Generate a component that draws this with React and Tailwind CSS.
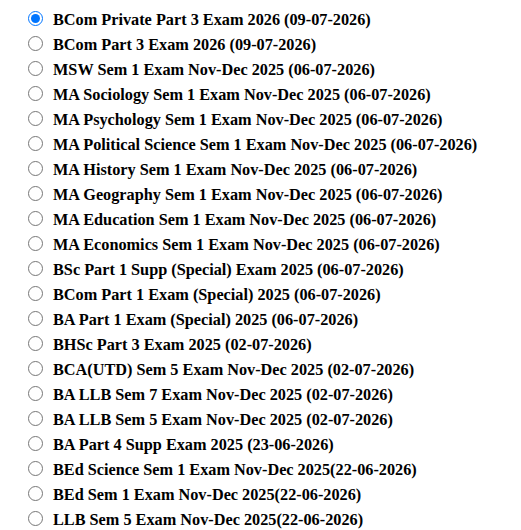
import React from "react";

const exams = [
  "BCom Private Part 3 Exam 2026 (09-07-2026)",
  "BCom Part 3 Exam 2026 (09-07-2026)",
  "MSW Sem 1 Exam Nov-Dec 2025 (06-07-2026)",
  "MA Sociology Sem 1 Exam Nov-Dec 2025 (06-07-2026)",
  "MA Psychology Sem 1 Exam Nov-Dec 2025 (06-07-2026)",
  "MA Political Science Sem 1 Exam Nov-Dec 2025 (06-07-2026)",
  "MA History Sem 1 Exam Nov-Dec 2025 (06-07-2026)",
  "MA Geography Sem 1 Exam Nov-Dec 2025 (06-07-2026)",
  "MA Education Sem 1 Exam Nov-Dec 2025 (06-07-2026)",
  "MA Economics Sem 1 Exam Nov-Dec 2025 (06-07-2026)",
  "BSc Part 1 Supp (Special) Exam 2025 (06-07-2026)",
  "BCom Part 1 Exam (Special) 2025 (06-07-2026)",
  "BA Part 1 Exam (Special) 2025 (06-07-2026)",
  "BHSc Part 3 Exam 2025 (02-07-2026)",
  "BCA(UTD) Sem 5 Exam Nov-Dec 2025 (02-07-2026)",
  "BA LLB Sem 7 Exam Nov-Dec 2025 (02-07-2026)",
  "BA LLB Sem 5 Exam Nov-Dec 2025 (02-07-2026)",
  "BA Part 4 Supp Exam 2025 (23-06-2026)",
  "BEd Science Sem 1 Exam Nov-Dec 2025(22-06-2026)",
  "BEd Sem 1 Exam Nov-Dec 2025(22-06-2026)",
  "LLB Sem 5 Exam Nov-Dec 2025(22-06-2026)",
];

export default function App() {
  return (
    <div className="w-[521px] h-[530px] overflow-hidden bg-white pt-[6px] pl-[28px] font-['Liberation_Serif',serif] font-bold text-[16.25px] text-black">
      {exams.map((label, i) => (
        <label key={i} className="flex items-center h-[25px] gap-[10px] whitespace-nowrap">
          <input
            type="radio"
            name="exam"
            defaultChecked={i === 0}
            className="m-0 w-[15px] h-[15px] shrink-0"
          />
          <span className="pt-[3px]">{label}</span>
        </label>
      ))}
    </div>
  );
}
